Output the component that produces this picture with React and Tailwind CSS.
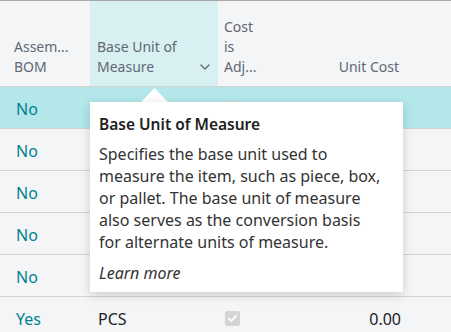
import { ChevronDown } from "lucide-react";

const rows = [
  { bom: "No", uom: "", checked: true, cost: "", active: true },
  { bom: "No", uom: "", checked: false, cost: "" },
  { bom: "No", uom: "", checked: false, cost: "" },
  { bom: "No", uom: "", checked: false, cost: "" },
  { bom: "No", uom: "", checked: false, cost: "" },
  { bom: "Yes", uom: "PCS", checked: true, cost: "0.00" },
];

const tipLines = [
  "Specifies the base unit used to",
  "measure the item, such as piece, box,",
  "or pallet. The base unit of measure",
  "also serves as the conversion basis",
  "for alternate units of measure.",
];

function Checkbox() {
  return (
    <div className="w-[15px] h-[15px] rounded-[2px] bg-[#d4d4d4] flex items-center justify-center">
      <svg width="11" height="11" viewBox="0 0 12 12" fill="none">
        <path d="M2 6.2l2.6 2.6L10 3.2" stroke="white" strokeWidth="2" strokeLinecap="round" strokeLinejoin="round" />
      </svg>
    </div>
  );
}

export default function App() {
  return (
    <div
      className="relative w-[451px] h-[332px] overflow-hidden bg-[#f4f5f7] border-t border-[#a8a8a8]"
      style={{ fontFamily: '"Noto Sans", "Open Sans", sans-serif' }}
    >
      {/* header */}
      <div className="flex h-[86px] border-b border-[#d3d3d3] text-[14px] leading-[20px] text-[#5f6873]">
        <div className="w-[90px] pl-[14px] pb-[9px] flex flex-col justify-end">
          <span>Assem...</span>
          <span>BOM</span>
        </div>
        <div className="w-[128px] bg-[#d8f0f2] pl-[7px] pr-[5px] pb-[9px] flex items-end justify-between">
          <div className="flex flex-col">
            <span>Base Unit of</span>
            <span>Measure</span>
          </div>
          <ChevronDown className="w-4 h-4 mb-[2px] text-[#5f6873]" strokeWidth={2} />
        </div>
        <div className="w-[80px] pl-[6px] pb-[9px] flex flex-col justify-end">
          <span>Cost</span>
          <span>is</span>
          <span>Adj...</span>
        </div>
        <div className="w-[101px] pb-[9px] flex items-end justify-end">
          <span>Unit Cost</span>
        </div>
      </div>

      {/* rows */}
      {rows.map((r, i) => (
        <div
          key={i}
          className={
            "flex items-center h-[42px] pt-[2px] border-b border-[#d3d3d3] text-[16px] " +
            (r.active ? "bg-[#b3e7ea]" : "")
          }
        >
          <div className="w-[90px] pl-[16px] text-[#00838f]">{r.bom}</div>
          <div className="w-[128px] pl-[8px] text-[#212121]">{r.uom}</div>
          <div className="w-[80px] pl-[7px]">{r.checked && <Checkbox />}</div>
          <div className="w-[103px] text-right text-[#212121]">{r.cost}</div>
        </div>
      ))}

      {/* tooltip */}
      <svg className="absolute left-[140px] top-[87px]" width="29" height="15" viewBox="0 0 29 15">
        <path d="M0 15 L14.5 0 L29 15 Z" fill="white" />
      </svg>
      <div className="absolute left-[90px] top-[101px] w-[313px] bg-white shadow-[0_3px_10px_rgba(0,0,0,0.16)] px-[9px] pt-[11px] pb-[8px] text-[16px] leading-[22px]">
        <div className="text-[15.5px] font-semibold text-[#212121]">Base Unit of Measure</div>
        <div className="mt-[8px] text-[#333333] whitespace-nowrap">
          {tipLines.map((l) => (
            <div key={l}>{l}</div>
          ))}
        </div>
        <div className="mt-[9px] italic text-[#333333]">Learn more</div>
      </div>
    </div>
  );
}
